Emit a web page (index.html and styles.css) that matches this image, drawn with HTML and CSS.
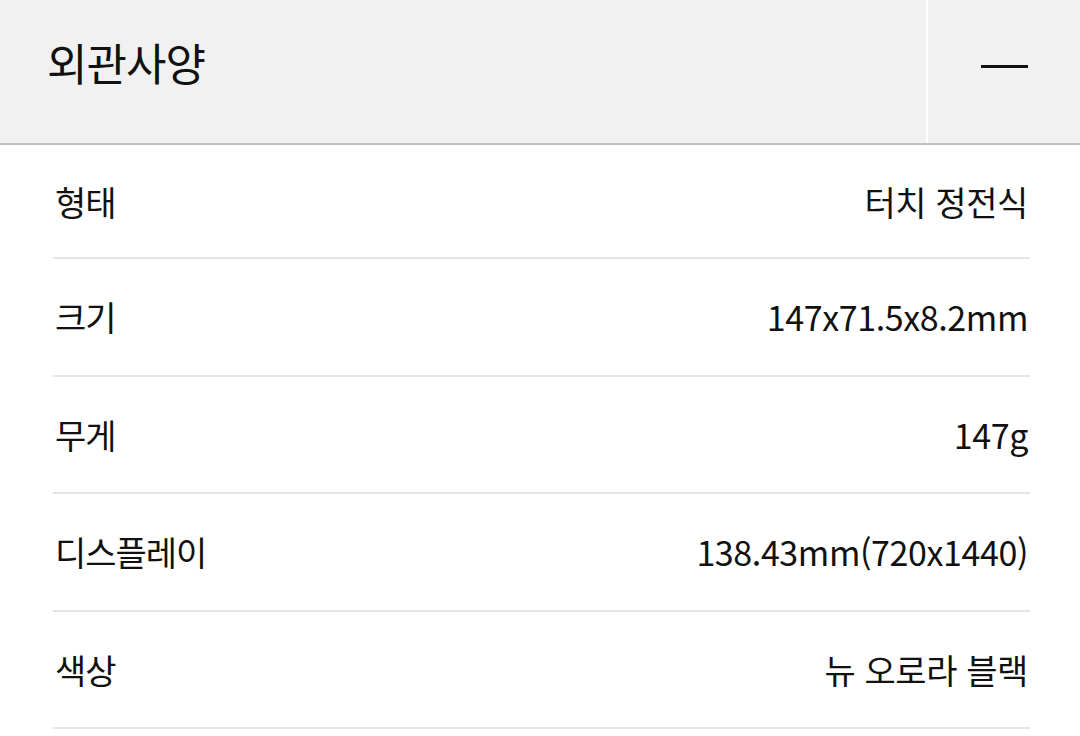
FILE: index.html
```html
<!DOCTYPE html>
<html lang="ko">
  <head>
    <meta charset="UTF-8" />
    <meta name="viewport" content="width=device-width, initial-scale=1.0" />
    <title>외관사양</title>
    <link rel="stylesheet" href="styles.css">
  </head>
  <body>
    <section class="spec-panel">
      <header class="spec-header">
        <h2 class="spec-title">외관사양</h2>
        <button class="spec-toggle" type="button" aria-label="접기">
          <span class="minus"></span>
        </button>
      </header>

      <ul class="spec-list">
        <li class="spec-row">
          <span class="spec-label">형태</span>
          <span class="spec-value">터치 정전식</span>
        </li>
        <li class="spec-row">
          <span class="spec-label">크기</span>
          <span class="spec-value">147x71.5x8.2mm</span>
        </li>
        <li class="spec-row">
          <span class="spec-label">무게</span>
          <span class="spec-value">147g</span>
        </li>
        <li class="spec-row">
          <span class="spec-label">디스플레이</span>
          <span class="spec-value">138.43mm(720x1440)</span>
        </li>
        <li class="spec-row">
          <span class="spec-label">색상</span>
          <span class="spec-value">뉴 오로라 블랙</span>
        </li>
      </ul>
    </section>
  </body>
</html>
```

FILE: styles.css
```css
body {
  margin: 0;
  padding: 0;
  background-color: #fff;
  color: #111;
  font-family: "Noto Sans CJK KR", "Noto Sans", sans-serif;
}

.spec-header {
  display: flex;
  align-items: stretch;
  height: 143px;
  background-color: #f0f1f0;
  border-bottom: 2px solid #c2c2c2;
}

.spec-title {
  flex: 1;
  margin: 0;
  padding-left: 47px;
  font-size: 44px;
  font-weight: 400;
  line-height: 124px;
  letter-spacing: -1px;
}

.spec-toggle {
  width: 154px;
  padding: 0;
  background: none;
  border: none;
  border-left: 2px solid #fff;
  cursor: pointer;
  display: flex;
  align-items: center;
  justify-content: center;
}

.minus {
  display: block;
  width: 47px;
  height: 3px;
  margin-top: -10px;
  background-color: #111;
}

.spec-list {
  list-style: none;
  margin: 0 50px 0 53px;
  padding: 0;
}

.spec-row {
  display: flex;
  align-items: center;
  justify-content: space-between;
  height: 115.5px;
  border-bottom: 2px solid #e5e5e5;
  font-size: 34px;
  letter-spacing: -1px;
}

.spec-row:first-child {
  height: 112px;
}

.spec-label {
  padding-left: 2px;
}

.spec-value {
  padding-right: 2px;
  letter-spacing: -0.4px;
}
```
